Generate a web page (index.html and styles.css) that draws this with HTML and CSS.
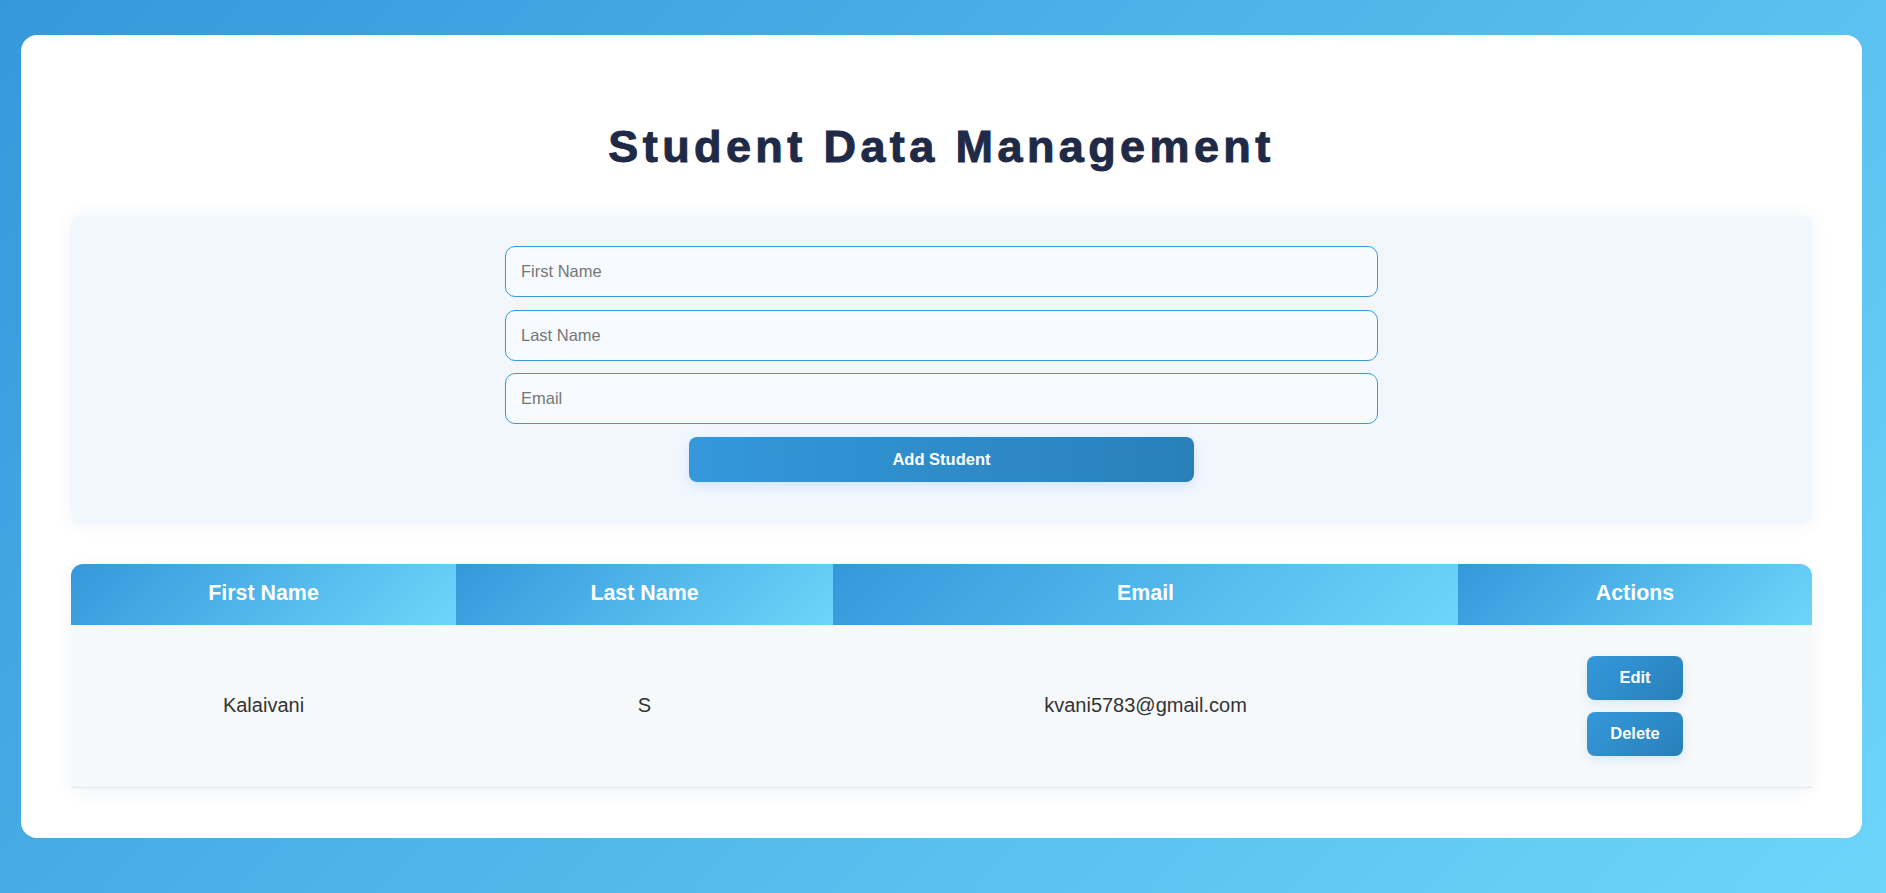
FILE: index.html
```html
<!DOCTYPE html>
<html lang="en">
<head>
<meta charset="utf-8">
<title>Student Data Management</title>
<link rel="stylesheet" href="styles.css">
</head>
<body>
<div class="card">
  <h1 class="title">Student Data Management</h1>
  <div class="form-panel">
    <form class="student-form">
      <input class="field" type="text" placeholder="First Name">
      <input class="field" type="text" placeholder="Last Name">
      <input class="field" type="email" placeholder="Email">
      <button class="add-btn" type="button">Add Student</button>
    </form>
  </div>
  <table class="students">
    <colgroup>
      <col class="c1"><col class="c2"><col class="c3"><col class="c4">
    </colgroup>
    <thead>
      <tr>
        <th class="th-first">First Name</th>
        <th>Last Name</th>
        <th>Email</th>
        <th class="th-last">Actions</th>
      </tr>
    </thead>
    <tbody>
      <tr>
        <td>Kalaivani</td>
        <td>S</td>
        <td>kvani5783@gmail.com</td>
        <td>
          <div class="actions">
            <button class="act-btn" type="button">Edit</button>
            <button class="act-btn" type="button">Delete</button>
          </div>
        </td>
      </tr>
    </tbody>
  </table>
</div>
</body>
</html>
```

FILE: styles.css
```css
* { box-sizing: border-box; }

html, body {
  margin: 0;
  height: 100%;
}

body {
  font-family: "Liberation Sans", Arial, sans-serif;
  background: linear-gradient(135deg, #3498db 0%, #6dd5fa 100%);
  padding: 35px 24px 55px 21px;
  overflow: hidden;
}

.card {
  background: #ffffff;
  border-radius: 16px;
  padding: 50px;
}

.title {
  margin: 36px 0 43px;
  font-size: 45px;
  line-height: 52px;
  font-weight: 700;
  letter-spacing: 4.4px;
  text-align: center;
  color: #1f2a47;
  -webkit-text-stroke: 1px #1f2a47;
}

.form-panel {
  background: #f2f7fe;
  border-radius: 10px;
  box-shadow: 0 0 18px rgba(40, 90, 140, 0.07);
  padding: 30px 0 42px;
}

.student-form {
  width: 873px;
  margin: 0 auto;
  display: flex;
  flex-direction: column;
  align-items: center;
  gap: 12.5px;
}

.field {
  width: 100%;
  height: 51px;
  border: 1px solid #3a98dc;
  border-radius: 10px;
  background: #f7fbff;
  padding: 0 15px;
  font-family: "Liberation Sans", Arial, sans-serif;
  font-size: 16.5px;
  color: #333;
  outline: none;
}

.field::placeholder { color: #767676; }

.add-btn {
  width: 505px;
  height: 45px;
  border: none;
  border-radius: 8px;
  background: linear-gradient(90deg, #3498db 0%, #2980b9 100%);
  color: #ffffff;
  font-family: "Liberation Sans", Arial, sans-serif;
  font-size: 16.5px;
  font-weight: 700;
  box-shadow: 0 4px 12px rgba(52, 152, 219, 0.18);
  cursor: pointer;
}

.students {
  width: 100%;
  margin-top: 40px;
  border-collapse: separate;
  border-spacing: 0;
  table-layout: fixed;
  border-radius: 12px;
  box-shadow: 0 4px 16px rgba(40, 90, 140, 0.07);
}

.c1 { width: 385px; }
.c2 { width: 377px; }
.c3 { width: 625px; }
.c4 { width: 354px; }

.students th {
  background: linear-gradient(135deg, #3498db 0%, #6dd5fa 100%);
  color: #ffffff;
  font-size: 21.4px;
  font-weight: 700;
  line-height: 25px;
  padding: 17px 10px 19px;
  text-align: center;
}

.students .th-first { border-top-left-radius: 12px; }
.students .th-last { border-top-right-radius: 12px; }

.students td {
  background: #f6f8fa;
  color: #333333;
  font-size: 20px;
  text-align: center;
  vertical-align: middle;
  padding: 31px 10px 31.5px;
  border-bottom: 1px solid #dfe7f0;
}

.actions {
  display: flex;
  flex-direction: column;
  align-items: center;
  gap: 12px;
}

.act-btn {
  width: 96px;
  height: 44px;
  border: none;
  border-radius: 8px;
  background: linear-gradient(135deg, #3498db 0%, #2980b9 100%);
  color: #ffffff;
  font-family: "Liberation Sans", Arial, sans-serif;
  font-size: 16.5px;
  font-weight: 700;
  box-shadow: 0 4px 10px rgba(52, 152, 219, 0.15);
  cursor: pointer;
}
```
